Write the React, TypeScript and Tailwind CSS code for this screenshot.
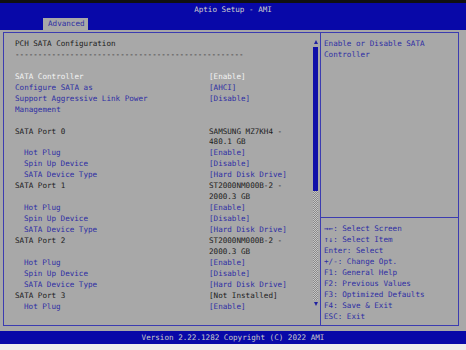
const mono = { fontFamily: '"DejaVu Sans Mono", "Liberation Mono", monospace' };

type Row = { label?: string; value?: string; lc?: string; vc?: string; indent?: boolean };

const DARK = "text-[#202020]";
const BLUE = "text-[#2e2ea4]";
const WHITE = "text-[#f4f4f4]";

const portRows = (name: string, model: string, size: string): Row[] => [
  { label: name, value: model, lc: DARK, vc: DARK },
  { value: size, vc: DARK },
  { label: "Hot Plug", value: "[Enable]", lc: BLUE, vc: BLUE, indent: true },
  { label: "Spin Up Device", value: "[Disable]", lc: BLUE, vc: BLUE, indent: true },
  { label: "SATA Device Type", value: "[Hard Disk Drive]", lc: BLUE, vc: BLUE, indent: true },
];

const rows: Row[] = [
  { label: "PCH SATA Configuration", lc: DARK },
  { label: "-".repeat(50), lc: DARK },
  {},
  { label: "SATA Controller", value: "[Enable]", lc: WHITE, vc: WHITE },
  { label: "Configure SATA as", value: "[AHCI]", lc: BLUE, vc: BLUE },
  { label: "Support Aggressive Link Power", value: "[Disable]", lc: BLUE, vc: BLUE },
  { label: "Management", lc: BLUE },
  {},
  ...portRows("SATA Port 0", "SAMSUNG MZ7KH4 -", "480.1 GB"),
  ...portRows("SATA Port 1", "ST2000NM000B-2 -", "2000.3 GB"),
  ...portRows("SATA Port 2", "ST2000NM000B-2 -", "2000.3 GB"),
  { label: "SATA Port 3", value: "[Not Installed]", lc: DARK, vc: DARK },
  { label: "Hot Plug", value: "[Enable]", lc: BLUE, vc: BLUE, indent: true },
];

const help = [
  "→←: Select Screen",
  "↑↓: Select Item",
  "Enter: Select",
  "+/-: Change Opt.",
  "F1: General Help",
  "F2: Previous Values",
  "F3: Optimized Defaults",
  "F4: Save & Exit",
  "ESC: Exit",
];

function Scrollbar() {
  return (
    <div className="w-[5px] mr-[2px] pt-[7px] pb-[19px] flex flex-col items-center">
      <div className="w-0 h-0 border-l-[2.5px] border-r-[2.5px] border-b-[4px] border-l-transparent border-r-transparent border-b-[#2020a0]" />
      <div className="mt-[3px] w-[5px] h-[144px] bg-[#1010a8]" />
      <div className="w-[5px] flex-1 bg-[repeating-conic-gradient(#8a8a8a_0%_25%,#c4c4c4_0%_50%)] bg-[length:2px_2px]" />
      <div className="mt-[2px] w-0 h-0 border-l-[2.5px] border-r-[2.5px] border-t-[4px] border-l-transparent border-r-transparent border-t-[#2020a0]" />
    </div>
  );
}

export default function App() {
  return (
    <div className="w-[466px] h-[350px] bg-[#ececec] flex flex-col overflow-hidden text-[7.6px]" style={mono}>
      <div className="h-[3px] bg-[#101010]" />
      <div className="h-[27px] bg-[#0808a8] relative">
        <div className="text-center text-[#cfcfcf] leading-[11px] pt-[1px]">Aptio Setup - AMI</div>
        <div className="absolute left-[43px] bottom-0 w-[45px] h-[12px] bg-[#a8a8a8] text-[#2e2ea4] leading-[12px] pl-[5px]">
          Advanced
        </div>
      </div>
      <div className="h-[301px] bg-[#a8a8a8] pl-[3px] pr-[7px] pt-[2px] pb-[5px]">
        <div className="h-full border border-[#3c3cb0] flex">
          <div className="flex-1 flex">
            <div className="flex-1 pl-[11px] pt-[6px] leading-[10.95px]">
              {rows.map((r, i) => (
                <div key={i} className="grid grid-cols-[194px_1fr] h-[10.95px] whitespace-pre">
                  <span className={`${r.lc ?? DARK} ${r.indent ? "pl-[9px]" : ""}`}>{r.label ?? ""}</span>
                  <span className={r.vc ?? DARK}>{r.value ?? ""}</span>
                </div>
              ))}
            </div>
            <Scrollbar />
          </div>
          <div className="w-[138px] border-l border-[#3c3cb0] flex flex-col">
            <div className="h-[185px] border-b border-[#3c3cb0] pl-[3px] pt-[6px] leading-[10.95px] text-[#2e2ea4]">
              <div>Enable or Disable SATA</div>
              <div>Controller</div>
            </div>
            <div className="pl-[3px] pt-[6px] leading-[10.95px] text-[#2e2ea4]">
              {help.map((h) => (
                <div key={h} className="whitespace-pre">{h}</div>
              ))}
            </div>
          </div>
        </div>
      </div>
      <div className="h-[13px] bg-[#0808a8] text-center text-[#c8c8c8] leading-[13px]">
        Version 2.22.1282 Copyright (C) 2022 AMI
      </div>
      <div className="flex-1" />
    </div>
  );
}
